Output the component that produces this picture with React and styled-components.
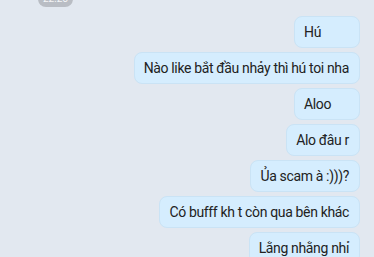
import React from "react";
import styled, { createGlobalStyle } from "styled-components";

const GlobalStyle = createGlobalStyle`
  body {
    margin: 0;
    background: #e2e8f0;
    font-family: Roboto, "Noto Sans", sans-serif;
  }
`;

const messages = [
  "Hú",
  "Nào like bắt đầu nhảy thì hú toi nha",
  "Aloo",
  "Alo đâu r",
  "Ủa scam à :)))?",
  "Có bufff kh t còn qua bên khác",
  "Lằng nhằng nhỉ",
];

const App = () => {
  return (
    <>
      <GlobalStyle />
      <Chat>
        <TimeRow>
          <TimePill>22:25</TimePill>
        </TimeRow>
        <Messages>
          {messages.map((text, i) => (
            <Bubble key={i}>{text}</Bubble>
          ))}
        </Messages>
      </Chat>
    </>
  );
};

const Chat = styled.div`
  width: 374px;
  height: 257px;
  overflow: hidden;
  background: #e2e8f0;
  display: flex;
  flex-direction: column;
`;

const TimeRow = styled.div`
  display: flex;
  padding-left: 38px;
  margin-top: -9px;
`;

const TimePill = styled.div`
  height: 16px;
  padding: 0 5px;
  border-radius: 8px;
  background: #b9bdc4;
  color: #f4f5f7;
  font-size: 10px;
  line-height: 16px;
`;

const Messages = styled.div`
  display: flex;
  flex-direction: column;
  align-items: flex-end;
  gap: 4px;
  padding: 9px 14px 0 0;
`;

const Bubble = styled.div`
  box-sizing: border-box;
  min-width: 66px;
  height: 32px;
  padding: 0 10px 0 9px;
  border: 1px solid #cae3f5;
  border-radius: 8px;
  background: #d5edfe;
  color: #222;
  font-size: 14px;
  letter-spacing: -0.35px;
  line-height: 30px;
  white-space: nowrap;
`;

export default App;
